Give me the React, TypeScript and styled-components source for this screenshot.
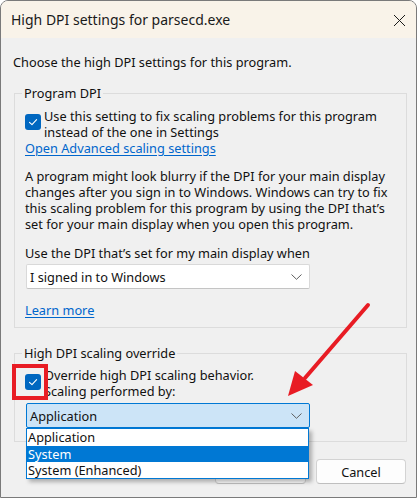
import React from "react";
import styled, { createGlobalStyle } from "styled-components";

const Global = createGlobalStyle`
  html, body { margin: 0; padding: 0; background: #ffffff; }
  body { font-family: "Noto Sans", "Open Sans", sans-serif; }
  #root { width: 420px; height: 500px; }
`;

const Stage = styled.div`
  position: relative;
  width: 420px;
  height: 500px;
  overflow: hidden;
`;

const Window = styled.div`
  box-sizing: border-box;
  width: 417px;
  height: 498px;
  border: 1px solid #7a7a7a;
  border-radius: 8px 8px 0 0;
  background: #f0f0f0;
  display: flex;
  flex-direction: column;
  overflow: hidden;
  font-family: "Noto Sans", "Open Sans", sans-serif;
  font-size: 12.75px;
  line-height: 16px;
  color: #111111;
`;

const TitleBar = styled.div`
  flex: none;
  height: 37px;
  background: #f9f3e9;
  display: flex;
  align-items: center;
  justify-content: space-between;
  padding: 0 10px;
`;

const Title = styled.span`
  font-size: 14px;
  color: #1a1a1a;
`;

const CloseButton = styled.span`
  display: flex;
  width: 13px;
  height: 13px;
  margin-top: 2px;
`;

const Body = styled.div`
  flex: 1;
  display: flex;
  flex-direction: column;
  padding: 16px 9px 0 12px;
`;

const Intro = styled.div``;

const Group = styled.fieldset<{ $top: number; $bottom: number; $padTop: number }>`
  margin: ${(p) => p.$top}px 0 0 1px;
  border: 1px solid #dcdcdc;
  padding: ${(p) => p.$padTop}px 10px ${(p) => p.$bottom}px 10px;
  min-width: 0;
`;

const Legend = styled.legend`
  padding: 0 2px;
  margin-left: -3px;
  line-height: 16px;
`;

const CheckRow = styled.div`
  display: flex;
  align-items: flex-start;
  gap: 3px;
`;

const CheckBox = styled.span<{ $offset: number }>`
  flex: none;
  width: 16px;
  height: 16px;
  margin-top: ${(p) => p.$offset}px;
  border-radius: 3px;
  background: #0067c0;
  display: flex;
  align-items: center;
  justify-content: center;
`;

const CheckText = styled.span``;

const Link = styled.a<{ $top?: number }>`
  display: block;
  width: fit-content;
  margin-top: ${(p) => p.$top ?? 0}px;
  color: #0066cc;
  text-decoration: underline;
  text-underline-offset: 2px;
  cursor: pointer;
`;

const Para = styled.div<{ $top: number }>`
  margin-top: ${(p) => p.$top}px;
`;

const SelectWrap = styled.div<{ $top: number }>`
  position: relative;
  margin: ${(p) => p.$top}px 0 0 1px;
  width: 284px;
`;

const Select = styled.div<{ $focused?: boolean }>`
  box-sizing: border-box;
  height: 25px;
  display: flex;
  align-items: center;
  justify-content: space-between;
  padding: 0 7px 0 3px;
  border-radius: 2px;
  border: 1px solid ${(p) => (p.$focused ? "#0078d4" : "#d9d9d9")};
  border-bottom-color: ${(p) => (p.$focused ? "#0078d4" : "#c4c4c4")};
  background: ${(p) => (p.$focused ? "#cce4f7" : "#ffffff")};
`;

const DropList = styled.div`
  position: absolute;
  left: 0;
  top: 100%;
  width: 283px;
  box-sizing: border-box;
  border: 1px solid #0078d4;
  background: #ffffff;
  box-shadow: 3px 3px 4px rgba(0, 0, 0, 0.28);
  z-index: 2;
`;

const DropItem = styled.div<{ $selected?: boolean }>`
  height: 16px;
  line-height: 16px;
  padding-left: 1px;
  background: ${(p) => (p.$selected ? "#0078d4" : "transparent")};
  color: ${(p) => (p.$selected ? "#ffffff" : "#111111")};
  &:first-child {
    height: 17px;
    line-height: 17px;
  }
`;

const ButtonRow = styled.div`
  display: flex;
  justify-content: flex-end;
  gap: 10px;
  margin: 17px 1px 0 0;
`;

const Button = styled.div<{ $width: number }>`
  box-sizing: border-box;
  width: ${(p) => p.$width}px;
  height: 25px;
  display: flex;
  align-items: center;
  justify-content: center;
  background: #fdfdfd;
  border: 1px solid #d3d3d3;
  border-bottom-color: #bfbfbf;
  border-radius: 4px;
`;

const Highlight = styled.div`
  position: absolute;
  left: 12px;
  top: 364px;
  width: 36px;
  height: 36px;
  box-sizing: border-box;
  border: 4px solid #e81c24;
  z-index: 3;
`;

const ArrowLayer = styled.svg`
  position: absolute;
  left: 0;
  top: 0;
  z-index: 3;
  pointer-events: none;
`;

const Chevron = () => (
  <svg width="11" height="6" viewBox="0 0 11 6">
    <path d="M0.5 0.5 L5.5 5.3 L10.5 0.5" fill="none" stroke="#5f5f5f" strokeWidth="1" />
  </svg>
);

const Check = () => (
  <svg width="16" height="16" viewBox="0 0 16 16">
    <path d="M4.5 8.3 L7 10.6 L11.6 5.6" fill="none" stroke="#ffffff" strokeWidth="1.1" strokeLinecap="round" strokeLinejoin="round" />
  </svg>
);

export default function App() {
  return (
    <Stage>
      <Global />
      <Window>
        <TitleBar>
          <Title>High DPI settings for parsecd.exe</Title>
          <CloseButton>
            <svg width="13" height="13" viewBox="0 0 13 13">
              <path d="M1 1 L12 12 M12 1 L1 12" stroke="#1a1a1a" strokeWidth="1" fill="none" />
            </svg>
          </CloseButton>
        </TitleBar>
        <Body>
          <Intro>Choose the high DPI settings for this program.</Intro>
          <Group $top={15} $padTop={7} $bottom={9}>
            <Legend>Program DPI</Legend>
            <CheckRow>
              <CheckBox $offset={6}>
                <Check />
              </CheckBox>
              <CheckText>
                Use this setting to fix scaling problems for this program
                <br />
                instead of the one in Settings
              </CheckText>
            </CheckRow>
            <Link>Open Advanced scaling settings</Link>
            <Para $top={12}>
              A program might look blurry if the DPI for your main display
              <br />
              changes after you sign in to Windows. Windows can try to fix
              <br />
              this scaling problem for this program by using the DPI that’s
              <br />
              set for your main display when you open this program.
            </Para>
            <Para $top={13}>Use the DPI that’s set for my main display when</Para>
            <SelectWrap $top={3}>
              <Select>
                <span>I signed in to Windows</span>
                <Chevron />
              </Select>
            </SelectWrap>
            <Link $top={13}>Learn more</Link>
          </Group>
          <Group $top={17} $padTop={6} $bottom={13}>
            <Legend>High DPI scaling override</Legend>
            <CheckRow>
              <CheckBox $offset={7}>
                <Check />
              </CheckBox>
              <CheckText>
                Override high DPI scaling behavior.
                <br />
                Scaling performed by:
              </CheckText>
            </CheckRow>
            <SelectWrap $top={4}>
              <Select $focused>
                <span>Application</span>
                <Chevron />
              </Select>
              <DropList>
                <DropItem>Application</DropItem>
                <DropItem $selected>System</DropItem>
                <DropItem>System (Enhanced)</DropItem>
              </DropList>
            </SelectWrap>
          </Group>
          <ButtonRow>
            <Button $width={91}>OK</Button>
            <Button $width={90}>Cancel</Button>
          </ButtonRow>
        </Body>
      </Window>
      <Highlight />
      <ArrowLayer width="420" height="500" viewBox="0 0 420 500">
        <line x1="368" y1="305" x2="305" y2="378" stroke="#e81c24" strokeWidth="4" strokeLinecap="round" />
        <polygon points="288,396 295,371 313,385" fill="#e81c24" />
      </ArrowLayer>
    </Stage>
  );
}
